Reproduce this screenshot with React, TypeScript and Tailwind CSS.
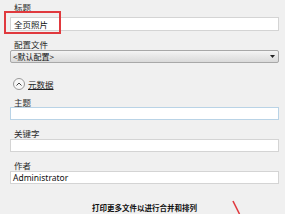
import React from "react";

const font = { fontFamily: '"Noto Sans CJK SC", "Noto Sans", sans-serif' };

function Label({ children, cls }: { children: React.ReactNode; cls: string }) {
  return <div className={`text-[8.5px] leading-[10px] text-[#2a2a2a] pl-[14px] ${cls}`}>{children}</div>;
}

export default function App() {
  return (
    <div className="relative w-[285px] h-[214px] overflow-hidden bg-[#f0f0f0]" style={font}>
      <div className="flex flex-col">
        <Label cls="h-[17px] pt-[2px]">标题</Label>
        <div className="ml-[10px] mr-[6px] h-[14px] bg-white border border-[#d4d4d4] text-[8.5px] leading-[12px] pl-[3px] text-[#111]">
          全页照片
        </div>
        <Label cls="h-[19px] pt-[8px]">配置文件</Label>
        <div className="ml-[10px] mr-[6px] h-[13px] border border-[#a8a8a8] rounded-[2px] bg-gradient-to-b from-[#f4f4f4] to-[#dadada] flex items-center justify-between pl-[2px] pr-[3px]">
          <span className="text-[8px] leading-[11px] text-[#111]">&lt;默认配置&gt;</span>
          <svg width="5" height="3" viewBox="0 0 5 3"><path d="M0 0 L5 0 L2.5 3 Z" fill="#222" /></svg>
        </div>
        <div className="mt-[14px] h-[14px] flex items-center pl-[13px] gap-[3px]">
          <div className="w-[12px] h-[12px] rounded-full border border-[#9a9a9a] bg-[#f7f7f7] flex items-center justify-center">
            <svg width="6" height="4" viewBox="0 0 6 4"><path d="M0.5 3.5 L3 1 L5.5 3.5" fill="none" stroke="#444" strokeWidth="1" /></svg>
          </div>
          <span className="text-[8.5px] leading-[10px] text-[#1e1e1e] underline underline-offset-[1px]">元数据</span>
        </div>
        <Label cls="h-[16px] pt-[6px]">主题</Label>
        <div className="ml-[10px] mr-[6px] h-[13px] bg-white border border-[#b9d3e6]" />
        <Label cls="h-[19px] pt-[8px]">关键字</Label>
        <div className="ml-[10px] mr-[6px] h-[13px] bg-white border border-[#d4d4d4]" />
        <Label cls="h-[19px] pt-[8px]">作者</Label>
        <div className="ml-[10px] mr-[6px] h-[13px] bg-white border border-[#d4d4d4] text-[8.5px] leading-[11px] pl-[2px] text-[#111]" style={{ fontFamily: '"Noto Sans", sans-serif' }}>
          Administrator
        </div>
        <div className="mt-[19px] text-center text-[7.5px] leading-[10px] font-bold text-[#111] pl-[4px]">
          打印更多文件以进行合并和排列
        </div>
      </div>
      <div className="absolute left-[4px] top-[11px] w-[57px] h-[23px] border-2 border-[#e0393e]" />
      <svg className="absolute left-0 top-0" width="285" height="214">
        <path d="M233 201 L239.5 214" stroke="#e0393e" strokeWidth="1.6" fill="none" />
      </svg>
    </div>
  );
}
